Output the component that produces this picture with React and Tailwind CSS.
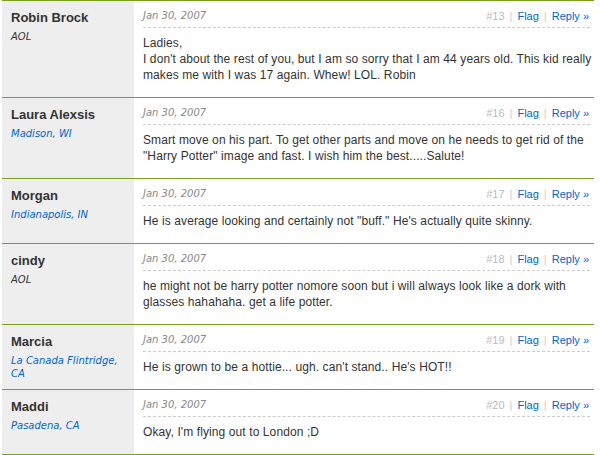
import React from 'react';

const comments = [
    {
        name: 'Robin Brock',
        location: 'AOL',
        linked: false,
        num: 13,
        lines: ['Ladies,', "I don't about the rest of you, but I am so sorry that I am 44 years old. This kid really makes me with I was 17 again. Whew! LOL. Robin"],
    },
    {
        name: 'Laura Alexsis',
        location: 'Madison, WI',
        linked: true,
        num: 16,
        lines: ['Smart move on his part. To get other parts and move on he needs to get rid of the "Harry Potter" image and fast. I wish him the best.....Salute!'],
    },
    {
        name: 'Morgan',
        location: 'Indianapolis, IN',
        linked: true,
        num: 17,
        lines: ['He is average looking and certainly not "buff." He\'s actually quite skinny.'],
    },
    {
        name: 'cindy',
        location: 'AOL',
        linked: false,
        num: 18,
        lines: ['he might not be harry potter nomore soon but i will always look like a dork with glasses hahahaha. get a life potter.'],
    },
    {
        name: 'Marcia',
        location: 'La Canada Flintridge, CA',
        linked: true,
        num: 19,
        lines: ["He is grown to be a hottie... ugh. can't stand.. He's HOT!!"],
    },
    {
        name: 'Maddi',
        location: 'Pasadena, CA',
        linked: true,
        num: 20,
        lines: ["Okay, I'm flying out to London ;D"],
    },
];

// one comment row: gray author column + body
const CommentRow = ({ c, last }) => (
    <div className={`flex border-t border-[#7a9f1c] ${last ? 'border-b' : ''}`}>
        <div className="w-[132px] shrink-0 bg-[#eeeeee] pl-[9px] pr-2 pt-[9px]">
            <div className="text-[13px] leading-[16px] font-bold text-[#333333]">{c.name}</div>
            <div
                className={`[font-family:'DejaVu_Sans',Verdana,sans-serif] mt-1 text-[10px] leading-[13px] italic ${
                    c.linked ? 'text-[#0066cc]' : 'text-[#333333]'
                }`}
            >
                {c.location}
            </div>
        </div>
        <div className="flex-1 pl-[9px]">
            <div className="flex items-start justify-between border-b border-dashed border-[#cccccc] pt-[7px] pb-[3px] mr-[4px] leading-[16px]">
                <span className="[font-family:'DejaVu_Sans',Verdana,sans-serif] text-[10px] italic text-[#888888]">Jan 30, 2007</span>
                <span className="text-[11px] pr-[1px]">
                    <span className="text-[#bbbbbb]">#{c.num}</span>
                    <span className="text-[#cccccc] px-[5px]">|</span>
                    <span className="text-[#0066cc]">Flag</span>
                    <span className="text-[#cccccc] px-[5px]">|</span>
                    <span className="text-[#0066cc]">Reply »</span>
                </span>
            </div>
            <div className="pt-[7px] pb-[14px] text-[12px] leading-[16px] tracking-[0.1px] text-[#333333]">
                {c.lines.map((l, i) => (
                    <div key={i}>{l}</div>
                ))}
            </div>
        </div>
    </div>
);

export default function App() {
    return (
        <div className="[font-family:'Liberation_Sans',Arial,sans-serif] w-[600px] h-[455px] bg-white overflow-hidden">
            <div className="ml-[2px] w-[592px]">
                {comments.map((c, i) => (
                    <CommentRow key={c.num} c={c} last={i === comments.length - 1} />
                ))}
            </div>
        </div>
    );
}
